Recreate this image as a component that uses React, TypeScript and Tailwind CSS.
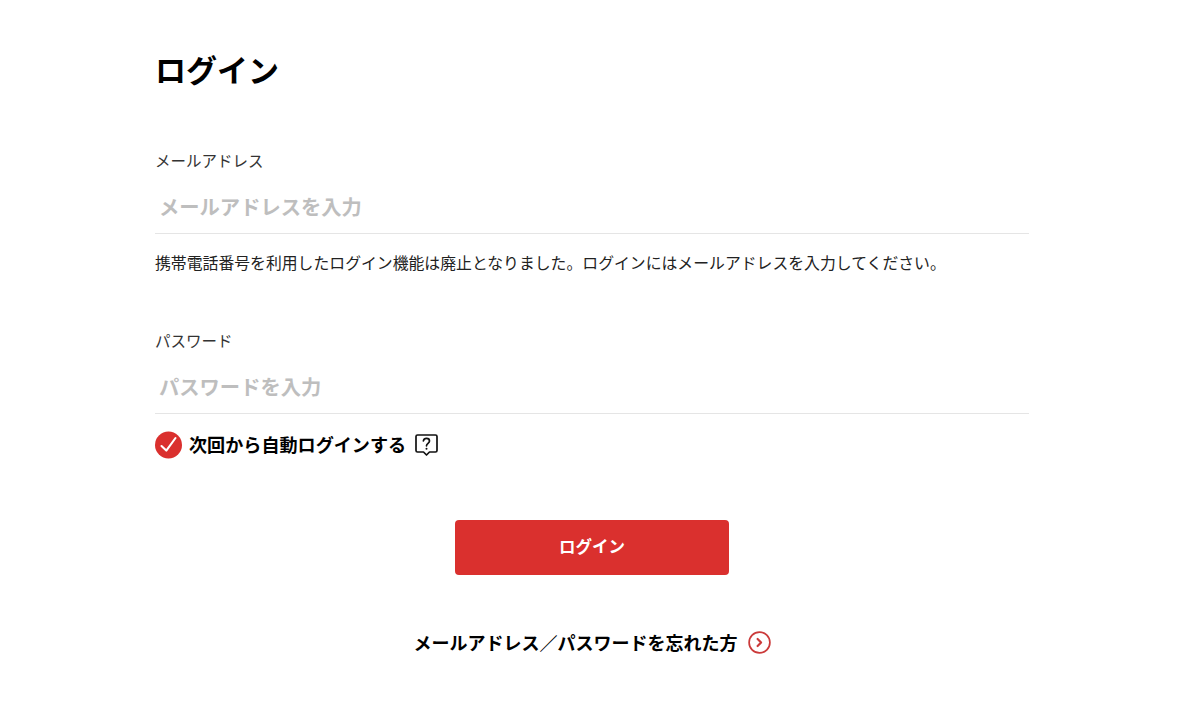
export default function App() {
  return (
    <div className="min-h-[704px] bg-white text-black" style={{ fontFamily: "'Noto Sans CJK JP', sans-serif" }}>
      <div className="ml-[155px] w-[874px] flex flex-col">
        <h1 className="mt-[47px] h-[44px] text-[31px] leading-[44px] font-bold">ログイン</h1>
        <label className="mt-[57px] h-[24px] text-[15.5px] leading-[24px] text-[#333]">メールアドレス</label>
        <div className="mt-[21px] h-[41px] border-b border-[#e5e5e5] pl-[4px] text-[20.3px] leading-[26px] font-bold text-[#bebebe]">メールアドレスを入力</div>
        <p className="mt-[17px] h-[24px] text-[15.85px] leading-[24px] text-[#222]">携帯電話番号を利用したログイン機能は廃止となりました。ログインにはメールアドレスを入力してください。</p>
        <label className="mt-[53px] h-[24px] text-[15.5px] leading-[24px] text-[#333]">パスワード</label>
        <div className="mt-[21px] h-[41px] border-b border-[#e5e5e5] pl-[4px] text-[20.3px] leading-[26px] font-bold text-[#bebebe]">パスワードを入力</div>
        <div className="mt-[17px] flex h-[28px] items-center">
          <svg width="28" height="28" viewBox="0 0 28 28">
            <circle cx="13.5" cy="14" r="13.5" fill="#da302e" />
            <path d="M6.5 15l4.8 4.6L20.5 7" fill="none" stroke="#fff" strokeWidth="2.1" strokeLinecap="round" strokeLinejoin="round" />
          </svg>
          <span className="ml-[6px] pb-[2px] text-[18.1px] leading-[26px] font-bold text-black">次回から自動ログインする</span>
          <svg className="ml-[8px]" width="25" height="25" viewBox="0 0 25 25">
            <path d="M3.5 2h18a1.5 1.5 0 0 1 1.5 1.5v14a1.5 1.5 0 0 1-1.5 1.5h-6l-3 3-3-3h-6a1.5 1.5 0 0 1-1.5-1.5v-14a1.5 1.5 0 0 1 1.5-1.5z" fill="none" stroke="#111" strokeWidth="1.7" strokeLinejoin="round" />
            <path d="M9.4 7.8c.3-1.5 1.5-2.4 3.1-2.4 1.8 0 3 1.1 3 2.6 0 2.3-3 2.4-3 4.8" fill="none" stroke="#111" strokeWidth="1.7" strokeLinecap="round" />
            <circle cx="12.5" cy="15.8" r="1" fill="#111" />
          </svg>
        </div>
        <button className="mt-[61px] h-[55px] w-[274px] self-center rounded-[4px] bg-[#da302e] pb-[2px] text-[16.5px] font-bold text-white">ログイン</button>
        <div className="mt-[54px] flex h-[26px] items-center justify-center">
          <span className="text-[18px] leading-[26px] font-bold text-black">メールアドレス／パスワードを忘れた方</span>
          <svg className="ml-[10px]" width="23" height="23" viewBox="0 0 23 23">
            <circle cx="11.5" cy="11.5" r="10.4" fill="none" stroke="#cb3a3a" strokeWidth="1.7" />
            <path d="M9.6 8l3.5 3.5-3.5 3.5" fill="none" stroke="#cb3a3a" strokeWidth="2.2" strokeLinecap="round" strokeLinejoin="round" />
          </svg>
        </div>
      </div>
    </div>
  );
}
